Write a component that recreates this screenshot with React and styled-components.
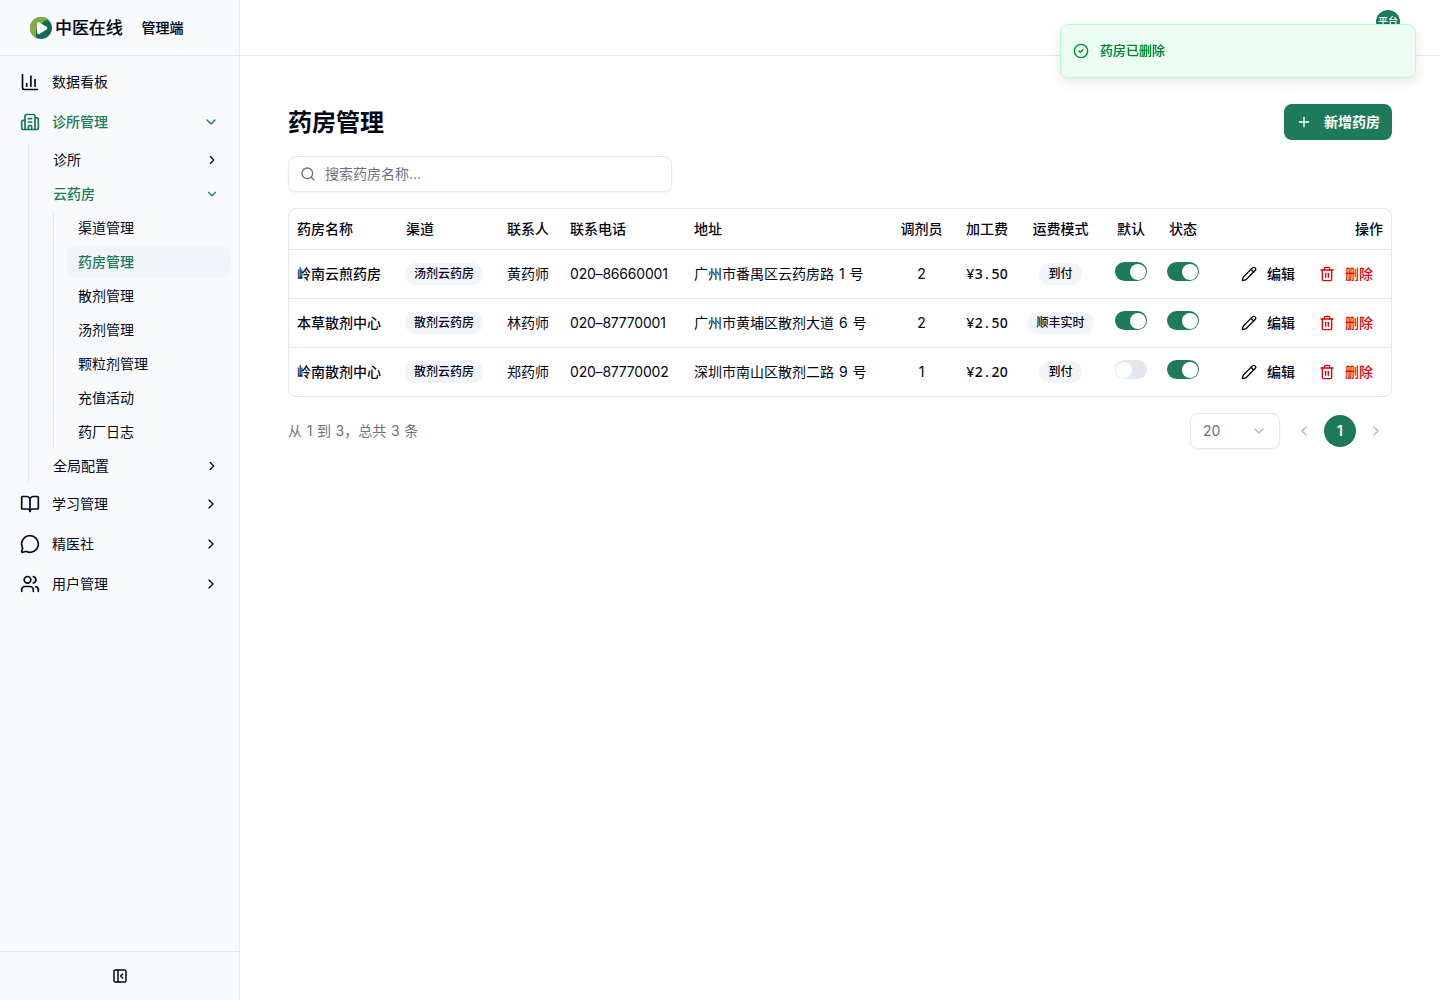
import React, { useState } from 'react'
import styled, { createGlobalStyle, css } from 'styled-components'
import {
    BookOpen, Building2, ChartColumn, ChevronDown, ChevronLeft, ChevronRight,
    CircleCheck, MessageCircle, PanelLeftClose, Pencil, Plus, Search, Trash2, Users
} from 'lucide-react'

const pharmacies = [
    { name: '岭南云煎药房', channel: '汤剂云药房', contact: '黄药师', phone: '020–86660001', address: '广州市番禺区云药房路 1 号', staff: 2, fee: '¥3.50', shipping: '到付', isDefault: true, enabled: true },
    { name: '本草散剂中心', channel: '散剂云药房', contact: '林药师', phone: '020–87770001', address: '广州市黄埔区散剂大道 6 号', staff: 2, fee: '¥2.50', shipping: '顺丰实时', isDefault: true, enabled: true },
    { name: '岭南散剂中心', channel: '散剂云药房', contact: '郑药师', phone: '020–87770002', address: '深圳市南山区散剂二路 9 号', staff: 1, fee: '¥2.20', shipping: '到付', isDefault: false, enabled: true },
]

const cloudPages = ['渠道管理', '药房管理', '散剂管理', '汤剂管理', '颗粒剂管理', '充值活动', '药厂日志']

const Logo = () => (
    <svg width="22" height="22" viewBox="0 0 22 22">
        <circle cx="11" cy="11" r="11" fill="#126b58" />
        <path d="M4.500 20A11 11 0 0 1 11 0c3.200 0 6 1.300 8 3.500-2.500-.8-4.500-.3-5.500 1.500L7 11c-1.200 3-1.500 6-.5 10z" fill="#83ad42" />
        <path d="M7 7v8.500c0 1.400 1.200 2 2.300 1.400l7.200-4.300c1.100-.7 1.100-2.200 0-2.800L9.300 5.600C8.200 5 7 5.600 7 7z" fill="#fff" />
    </svg>
)

const Switch = ({ initial }) => {
    const [on, setOn] = useState(initial)
    return <Track type="button" role="switch" aria-checked={on} $on={on} onClick={() => setOn(!on)}><Thumb /></Track>
}

const Sidebar = () => {
    const [current, setCurrent] = useState('药房管理')

    return (
        <Aside>
            <Brand>
                <Logo />
                <BrandName>中医在线</BrandName>
                <BrandRole>管理端</BrandRole>
            </Brand>
            <Nav>
                <NavItem><ChartColumn size={20} /><span>数据看板</span></NavItem>
                <NavItem $active><Building2 size={20} /><span>诊所管理</span><ChevronDown size={16} /></NavItem>
                <Branch>
                    <SubItem><span>诊所</span><ChevronRight size={14} /></SubItem>
                    <SubItem $active><span>云药房</span><ChevronDown size={14} /></SubItem>
                    <Leaves>
                        {cloudPages.map(page => (
                            <Leaf key={page} $active={page === current} onClick={() => setCurrent(page)}>{page}</Leaf>
                        ))}
                    </Leaves>
                    <SubItem><span>全局配置</span><ChevronRight size={14} /></SubItem>
                </Branch>
                <NavItem><BookOpen size={20} /><span>学习管理</span><ChevronRight size={16} /></NavItem>
                <NavItem><MessageCircle size={20} /><span>精医社</span><ChevronRight size={16} /></NavItem>
                <NavItem><Users size={20} /><span>用户管理</span><ChevronRight size={16} /></NavItem>
            </Nav>
            <Collapse><PanelLeftClose size={16} strokeWidth={2.25} /></Collapse>
        </Aside>
    )
}

const PharmacyTable = () => (
    <TableBox>
        <Table>
            <colgroup>
                <col width="109" /><col width="101" /><col width="63" /><col width="124" />
                <col width="206" /><col width="59" /><col width="65" /><col width="89" />
                <col width="52" /><col width="52" /><col />
            </colgroup>
            <thead>
                <tr>
                    <Th>药房名称</Th>
                    <Th>渠道</Th>
                    <Th>联系人</Th>
                    <Th>联系电话</Th>
                    <Th>地址</Th>
                    <Th $align="center">调剂员</Th>
                    <Th $align="right">加工费</Th>
                    <Th $align="center">运费模式</Th>
                    <Th $align="center">默认</Th>
                    <Th $align="center">状态</Th>
                    <Th $align="right">操作</Th>
                </tr>
            </thead>
            <tbody>
                {pharmacies.map(item => (
                    <tr key={item.name}>
                        <Td $bold>{item.name}</Td>
                        <Td><Badge>{item.channel}</Badge></Td>
                        <Td>{item.contact}</Td>
                        <Td><Phone>{item.phone}</Phone></Td>
                        <Td>{item.address}</Td>
                        <Td $align="center">{item.staff}</Td>
                        <Td $align="right">
                            <Fee>{item.fee.split('').map((char, i) => <span key={i}>{char}</span>)}</Fee>
                        </Td>
                        <Td><Badge $center>{item.shipping}</Badge></Td>
                        <Td><Switch initial={item.isDefault} /></Td>
                        <Td><Switch initial={item.enabled} /></Td>
                        <Td>
                            <Actions>
                                <RowButton><Pencil size={16} />编辑</RowButton>
                                <RowButton $danger><Trash2 size={16} />删除</RowButton>
                            </Actions>
                        </Td>
                    </tr>
                ))}
            </tbody>
        </Table>
    </TableBox>
)

const App = () => (
    <>
        <GlobalStyle />
        <Layout>
            <Sidebar />
            <Main>
                <Topbar><Avatar>平台</Avatar></Topbar>
                <Content>
                    <TitleRow>
                        <Title>药房管理</Title>
                        <AddButton><Plus size={16} />新增药房</AddButton>
                    </TitleRow>
                    <SearchBox>
                        <Search size={16} />
                        <input placeholder="搜索药房名称..." />
                    </SearchBox>
                    <PharmacyTable />
                    <Footer>
                        <Total>从 1 到 3，总共 3 条</Total>
                        <Pager>
                            <PageSize>20<ChevronDown size={16} /></PageSize>
                            <PageArrow disabled><ChevronLeft size={16} /></PageArrow>
                            <PageNumber>1</PageNumber>
                            <PageArrow disabled><ChevronRight size={16} /></PageArrow>
                        </Pager>
                    </Footer>
                </Content>
            </Main>
        </Layout>
        <Toast><CircleCheck size={16} /><span>药房已删除</span></Toast>
    </>
)

export default App

const GlobalStyle = createGlobalStyle`
    * {
        box-sizing: border-box;
    }
    body {
        margin: 0;
        color: #020618;
        background: #fff;
        font-family: Inter, "Noto Sans CJK SC", sans-serif;
        font-size: 14px;
        line-height: 20px;
        word-spacing: 1px;
        -webkit-font-smoothing: antialiased;
    }
    button, input {
        font: inherit;
        color: inherit;
    }
    button {
        border: 0;
        padding: 0;
        background: none;
        cursor: pointer;
    }
    svg {
        flex-shrink: 0;
    }
`

const strong = css`
    font-weight: 500;
    -webkit-text-stroke: .15px currentColor;
`

const Layout = styled.div`
    display: flex;
    height: 100vh;
`

const Aside = styled.aside`
    display: flex;
    flex-direction: column;
    width: 240px;
    flex-shrink: 0;
    background: #f8fafc;
    border-right: 1px solid #e2e8f0;
`

const Brand = styled.div`
    display: flex;
    align-items: center;
    height: 56px;
    padding-left: 30px;
    border-bottom: 1px solid #e2e8f0;
`

const BrandName = styled.span`
    margin-left: 3px;
    font-size: 17px;
    letter-spacing: -.1px;
    ${strong}
`

const BrandRole = styled.span`
    margin-left: 19px;
    ${strong}
`

const Nav = styled.nav`
    flex: 1;
    padding: 8px;
    display: flex;
    flex-direction: column;
    gap: 4px;
`

const itemColor = css`
    color: ${props => props.$active ? '#1d7a5a' : 'inherit'};
    font-weight: ${props => props.$active ? 500 : 400};
`

const NavItem = styled.button`
    display: flex;
    align-items: center;
    gap: 12px;
    height: 36px;
    padding: 0 12px;
    text-align: left;
    ${itemColor}
    span {
        flex: 1;
    }
`

const Branch = styled.div`
    display: flex;
    flex-direction: column;
    gap: 2px;
    margin-left: 20px;
    padding-left: 12px;
    border-left: 1px solid #e2e8f0;
`

const SubItem = styled.button`
    display: flex;
    align-items: center;
    justify-content: space-between;
    height: 32px;
    padding: 0 12px;
    ${itemColor}
`

const Leaves = styled.div`
    display: flex;
    flex-direction: column;
    gap: 2px;
    margin-left: 12px;
    padding-left: 12px;
    border-left: 1px solid #e2e8f0;
`

const Leaf = styled.button`
    height: 32px;
    padding-left: 12px;
    border-radius: 8px;
    text-align: left;
    background: ${props => props.$active ? '#f1f5f9' : 'transparent'};
    ${itemColor}
`

const Collapse = styled.button`
    display: flex;
    align-items: center;
    justify-content: center;
    height: 49px;
    border-top: 1px solid #e2e8f0;
`

const Main = styled.main`
    flex: 1;
    min-width: 0;
`

const Topbar = styled.header`
    display: flex;
    justify-content: flex-end;
    height: 56px;
    padding: 10px 40px 0;
    border-bottom: 1px solid #e2e8f0;
`

const Avatar = styled.div`
    width: 24px;
    height: 24px;
    border-radius: 50%;
    background: #1d7a5a;
    color: #fff;
    font-size: 10px;
    line-height: 23px;
    text-align: center;
    font-weight: 500;
`

const Content = styled.div`
    padding: 48px;
    display: flex;
    flex-direction: column;
    gap: 16px;
`

const TitleRow = styled.div`
    display: flex;
    align-items: center;
    justify-content: space-between;
    height: 36px;
`

const Title = styled.h1`
    margin: 0;
    padding-top: 1px;
    font-size: 24px;
    line-height: 32px;
    font-weight: 700;
`

const AddButton = styled.button`
    display: flex;
    align-items: center;
    gap: 12px;
    height: 36px;
    padding: 0 12px;
    border-radius: 8px;
    background: #1d7a5a;
    color: #fff;
    font-weight: 700;
`

const SearchBox = styled.label`
    display: flex;
    align-items: center;
    gap: 8px;
    width: 384px;
    height: 36px;
    padding: 0 12px 0 11px;
    border: 1px solid #e2e8f0;
    border-radius: 8px;
    box-shadow: 0 1px 2px rgba(0, 0, 0, .05);
    color: #6a7282;
    input {
        flex: 1;
        border: 0;
        outline: 0;
        padding: 0;
        margin-left: 1px;
        background: none;
    }
    input::placeholder {
        color: #6a7282;
        opacity: 1;
    }
`

const TableBox = styled.div`
    border: 1px solid #e2e8f0;
    border-radius: 8px;
    overflow: hidden;
`

const Table = styled.table`
    width: 100%;
    table-layout: fixed;
    border-collapse: separate;
    border-spacing: 0;
`

const Th = styled.th`
    height: 40px;
    padding: 0 8px;
    font-weight: 500;
    white-space: nowrap;
    text-align: ${props => props.$align || 'left'};
`

const Td = styled.td`
    height: 49px;
    padding: 0 8px;
    border-top: 1px solid #e2e8f0;
    white-space: nowrap;
    font-weight: ${props => props.$bold ? 500 : 400};
    text-align: ${props => props.$align || 'left'};
`

const Badge = styled.span`
    display: block;
    width: fit-content;
    height: 22px;
    margin: ${props => props.$center ? '0 auto' : '0 -1px'};
    padding: 0 9px;
    border-radius: 11px;
    background: #f1f5f9;
    font-size: 12px;
    line-height: 22px;
    font-weight: 500;
`

const Phone = styled.span`
    letter-spacing: -.2px;
`

const Fee = styled.span`
    display: inline-flex;
    font-family: "Noto Sans", sans-serif;
    font-weight: 500;
    span {
        width: 8.4px;
        text-align: center;
    }
`

const Track = styled.button`
    display: flex;
    align-items: center;
    width: 32px;
    height: 19px;
    margin: 0 auto 5px;
    padding: 1px;
    border-radius: 10px;
    justify-content: ${props => props.$on ? 'flex-end' : 'flex-start'};
    background: ${props => props.$on ? '#1d7a5a' : '#e2e8f0'};
`

const Thumb = styled.span`
    width: 16px;
    height: 16px;
    border-radius: 50%;
    background: #fff;
`

const Actions = styled.div`
    display: flex;
    justify-content: flex-end;
    gap: 4px;
`

const RowButton = styled.button`
    display: flex;
    align-items: center;
    gap: 10px;
    height: 32px;
    padding: 0 10px;
    font-weight: 500;
    color: ${props => props.$danger ? '#e7000b' : 'inherit'};
`

const Footer = styled.div`
    display: flex;
    align-items: center;
    justify-content: space-between;
    height: 36px;
    color: #6a7282;
`

const Total = styled.span`
    word-spacing: .7px;
`

const Pager = styled.div`
    display: flex;
    align-items: center;
`

const PageSize = styled.button`
    display: flex;
    align-items: center;
    justify-content: space-between;
    width: 90px;
    height: 36px;
    margin-right: 8px;
    padding: 0 12px;
    border: 1px solid #e2e8f0;
    border-radius: 8px;
    box-shadow: 0 1px 2px rgba(0, 0, 0, .05);
    svg {
        opacity: .5;
    }
`

const PageArrow = styled.button`
    display: flex;
    align-items: center;
    justify-content: center;
    width: 32px;
    height: 32px;
    opacity: .5;
`

const PageNumber = styled.button`
    width: 32px;
    height: 32px;
    margin: 0 4px;
    border-radius: 50%;
    background: #1d7a5a;
    color: #fff;
    font-weight: 600;
`

const Toast = styled.div`
    position: fixed;
    top: 24px;
    right: 24px;
    display: flex;
    align-items: center;
    gap: 11px;
    width: 356px;
    height: 54px;
    padding: 0 12px;
    border: 1px solid #bbfbd0;
    border-radius: 8px;
    background: #ecfdf3;
    box-shadow: 0 4px 12px rgba(0, 0, 0, .1);
    color: #008a2e;
    font-size: 13px;
    ${strong}
    span {
        padding-bottom: 2px;
    }
`
